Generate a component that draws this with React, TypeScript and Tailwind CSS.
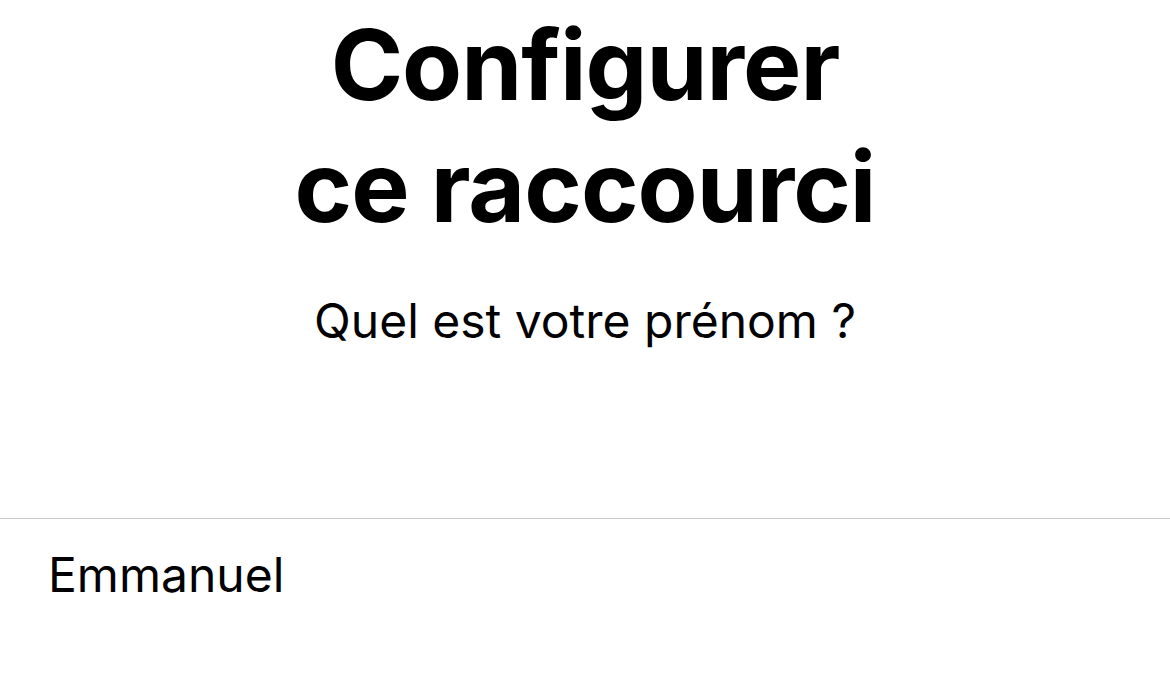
import React from 'react';

const App = () => {
  return (
    <div className="min-h-screen bg-white text-black" style={{ fontFamily: 'Inter, "Noto Sans", sans-serif' }}>
      <div className="flex flex-col items-center pt-[4px]">
        <h1 className="text-center text-[98px] font-bold leading-[122px] tracking-[-1px]">
          Configurer
          <br />
          ce raccourci
        </h1>
        <p className="mt-[44px] text-[48px] leading-[58px]">Quel est votre prénom ?</p>
      </div>
      <div className="mt-[168px] border-t border-[#c8c8c8]">
        <div className="px-[48px] pt-[27px] text-[48px] leading-[58px]">Emmanuel</div>
      </div>
    </div>
  );
};

export default App;
